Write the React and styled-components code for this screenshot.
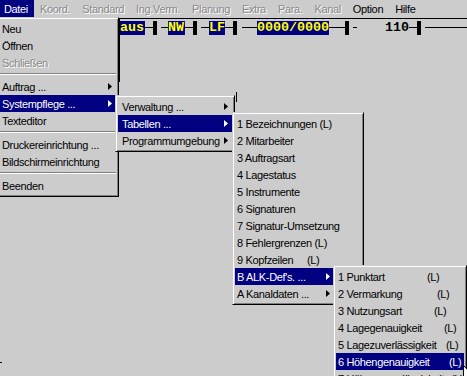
import React from 'react';
import styled, { createGlobalStyle, css } from 'styled-components';

const FACE = '#cccccc';
const NAVY = '#000080';

const GlobalStyle = createGlobalStyle`
  html, body {
    margin: 0;
    padding: 0;
    background: ${FACE};
  }
  body {
    font-family: "Liberation Sans", Arial, sans-serif;
  }
`;

const Screen = styled.div`
  position: relative;
  width: 467px;
  height: 376px;
  overflow: hidden;
  background: ${FACE};
  font-size: 11px;
  letter-spacing: -0.35px;
  color: #000;
`;

const MenuBar = styled.div`
  display: flex;
  height: 18px;
  margin-left: -2px;
`;

const BarItem = styled.div`
  display: flex;
  align-items: center;
  padding: 0 6px 0 6px;
  white-space: nowrap;
  ${p => p.$active && css`
    background: ${NAVY};
    color: #fff;
  `}
  ${p => p.$disabled && css`
    color: #8a8a8a;
    text-shadow: 1px 1px #fff;
  `}
`;

const Workspace = styled.div`
  display: flex;
`;

const Gutter = styled.div`
  width: 119px;
  flex: none;
`;

const ChildPane = styled.div`
  flex: 1;
  border-top: 1px solid #000;
`;

const TopStrip = styled.div`
  height: 63px;
  border-left: 1px solid #000;
  padding-top: 2px;
  box-sizing: border-box;
`;

const StatusRow = styled.div`
  display: flex;
  align-items: flex-start;
  height: 14px;
`;

const Field = styled.div`
  flex: none;
  width: ${p => p.$w}px;
  height: 14px;
  line-height: 14px;
  background: ${NAVY};
  color: #ffff00;
  font-family: "Liberation Mono", "Courier New", monospace;
  font-weight: bold;
  font-size: 13.33px;
  letter-spacing: 0;
  white-space: nowrap;
`;

const Plain = styled(Field)`
  background: transparent;
  color: #000;
  margin-left: ${p => p.$gap || 0}px;
`;

const Dash = styled.div`
  flex: ${p => (p.$grow ? '1' : 'none')};
  width: ${p => p.$w || 0}px;
  height: 1px;
  margin-top: 6px;
  margin-left: ${p => p.$gap || 0}px;
  background: #000;
`;

const Bar = styled.div`
  flex: none;
  width: 4px;
  height: 14px;
  background: #000;
`;

const Popup = styled.div`
  position: absolute;
  left: ${p => p.$x}px;
  top: ${p => p.$y}px;
  width: ${p => p.$w}px;
  box-sizing: border-box;
  background: ${FACE};
  border: 1px solid;
  border-color: ${FACE} #000 #000 ${FACE};
  box-shadow: inset 1px 1px #fff, inset -1px -1px #808080;
  padding: 2px;
`;

const Item = styled.div`
  display: flex;
  align-items: center;
  height: 17px;
  padding: 0 4px 0 ${p => p.$indent}px;
  white-space: pre;
  ${p => p.$active && css`
    background: ${NAVY};
    color: #fff;
  `}
  ${p => p.$disabled && css`
    color: #8a8a8a;
    text-shadow: 1px 1px #fff;
  `}
`;

const Label = styled.span`
  flex: none;
  ${p => p.$w && css`width: ${p.$w}px;`}
`;

const Separator = styled.div`
  margin: 2px 0 3px;
  border-top: 1px solid #808080;
  border-bottom: 1px solid #fff;
`;

const ArrowMark = styled.svg`
  flex: none;
  width: 4px;
  height: 7px;
  margin-left: ${p => (p.$fixed ? '0' : 'auto')};
`;

const Marks = styled.svg`
  position: absolute;
  left: 0;
  top: 0;
  pointer-events: none;
`;

const Pointer = styled.svg`
  position: absolute;
  left: 463px;
  top: 365px;
`;

const Arrow = ({ fixed }) => (
  <ArrowMark viewBox="0 0 4 7" $fixed={fixed}>
    <polygon points="0,0 4,3.5 0,7" fill="currentColor" />
  </ArrowMark>
);

const Menu = ({ x, y, w, indent, items }) => (
  <Popup $x={x} $y={y} $w={w}>
    {items.map((it, i) =>
      it.sep ? (
        <Separator key={i} />
      ) : (
        <Item key={i} $indent={indent} $active={it.active} $disabled={it.disabled}>
          <Label $w={it.at}>{it.label}</Label>
          {it.tail && <span>{it.tail}</span>}
          {it.sub && <Arrow fixed={!!it.at} />}
        </Item>
      )
    )}
  </Popup>
);

const fileMenu = [
  { label: 'Neu' },
  { label: 'Öffnen' },
  { label: 'Schließen', disabled: true },
  { sep: true },
  { label: 'Auftrag ...', sub: true },
  { label: 'Systempflege ...', sub: true, active: true },
  { label: 'Texteditor' },
  { sep: true },
  { label: 'Druckereinrichtung ...' },
  { label: 'Bildschirmeinrichtung' },
  { sep: true },
  { label: 'Beenden' },
];

const systemMenu = [
  { label: 'Verwaltung ...', sub: true },
  { label: 'Tabellen ...', sub: true, active: true },
  { label: 'Programmumgebung', sub: true },
];

const tableMenu = [
  { label: '1 Bezeichnungen (L)' },
  { label: '2 Mitarbeiter' },
  { label: '3 Auftragsart' },
  { label: '4 Lagestatus' },
  { label: '5 Instrumente' },
  { label: '6 Signaturen' },
  { label: '7 Signatur-Umsetzung' },
  { label: '8 Fehlergrenzen (L)' },
  { label: '9 Kopfzeilen', tail: '(L)', at: 70 },
  { label: "B ALK-Def's. ...", sub: true, active: true, at: 89 },
  { label: 'A Kanaldaten ...', sub: true, at: 89 },
];

const alkMenu = [
  { label: '1 Punktart', tail: '(L)', at: 89 },
  { label: '2 Vermarkung', tail: '(L)', at: 99 },
  { label: '3 Nutzungsart', tail: '(L)', at: 96 },
  { label: '4 Lagegenauigkeit', tail: '(L)', at: 106 },
  { label: '5 Lagezuverlässigkeit', tail: '(L)', at: 108 },
  { label: '6 Höhengenauigkeit', tail: '(L)', at: 111, active: true },
  { label: '7 Höhenzuverlässigkeit', tail: '(L)', at: 113 },
];

const menuBar = [
  { label: 'Datei', active: true },
  { label: 'Koord.', disabled: true },
  { label: 'Standard', disabled: true },
  { label: 'Ing.Verm.', disabled: true },
  { label: 'Planung', disabled: true },
  { label: 'Extra', disabled: true },
  { label: 'Para.', disabled: true },
  { label: 'Kanal', disabled: true },
  { label: 'Option' },
  { label: 'Hilfe' },
];

export default function App() {
  return (
    <Screen>
      <GlobalStyle />
      <MenuBar>
        {menuBar.map(m => (
          <BarItem key={m.label} $active={m.active} $disabled={m.disabled}>
            {m.label}
          </BarItem>
        ))}
      </MenuBar>
      <Workspace>
        <Gutter />
        <ChildPane>
          <TopStrip>
            <StatusRow>
              <Field $w={25}>aus</Field>
              <Dash $w={8} />
              <Bar />
              <Dash $w={7} $gap={4} />
              <Field $w={17}>NW</Field>
              <Dash $w={8} />
              <Bar />
              <Dash $w={8} $gap={4} />
              <Field $w={16}>LF</Field>
              <Dash $w={8} />
              <Bar />
              <Dash $w={15} $gap={5} />
              <Field $w={72}>0000/0000</Field>
              <Dash $w={16} />
              <Bar />
              <Dash $w={4} $gap={4} />
              <Plain $w={24} $gap={28}>110</Plain>
              <Dash $w={8} />
              <Bar />
              <Dash $grow $gap={4} />
            </StatusRow>
          </TopStrip>
        </ChildPane>
      </Workspace>

      <Marks width="467" height="376">
        <line x1="236.5" y1="92" x2="236.5" y2="102" stroke="#000" />
        <line x1="0" y1="362.5" x2="2" y2="362.5" stroke="#000" />
      </Marks>

      <Menu x={-3} y={17} w={122} indent={2} items={fileMenu} />
      <Menu x={115} y={95} w={120} indent={4} items={systemMenu} />
      <Menu x={232} y={112} w={132} indent={2} items={tableMenu} />
      <Menu x={333} y={265} w={134} indent={2} items={alkMenu} />

      <Pointer width="12" height="19" viewBox="0 0 12 19">
        <path d="M0.5 0.5 L0.5 16 L4 12.5 L6.5 18 L8.5 17 L6 11.5 L11 11.5 Z" fill="#fff" stroke="#000" />
      </Pointer>
    </Screen>
  );
}
